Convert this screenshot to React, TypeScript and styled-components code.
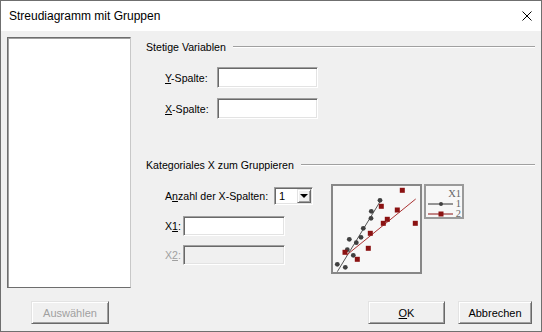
import React from 'react'
import styled, { createGlobalStyle } from 'styled-components'

const GlobalStyle = createGlobalStyle`
  html, body {
    margin: 0;
    padding: 0;
    background: #fff;
  }
  body {
    font-family: 'Liberation Sans', Arial, sans-serif;
  }
`

const Window = styled.div`
  width: 542px;
  height: 332px;
  box-sizing: border-box;
  border: 1px solid #6f6f6f;
  display: flex;
  flex-direction: column;
  background: #f0f0f0;
`

const TitleBar = styled.div`
  height: 30px;
  flex: none;
  background: #fff;
  display: flex;
  align-items: center;
  justify-content: space-between;
  padding: 0 9px 0 8px;
`

const Title = styled.span`
  font-size: 12px;
  color: #000;
`

const Body = styled.div`
  flex: 1;
  display: flex;
  flex-direction: column;
  padding: 6px 6px 0 6px;
  font-size: 10.6px;
  color: #000;
`

const Main = styled.div`
  display: flex;
  height: 251px;
`

const ListBox = styled.div`
  width: 124px;
  height: 251px;
  flex: none;
  box-sizing: border-box;
  background: #fff;
  border: 1px solid;
  border-color: #6d6d6d #c8c8c8 #6d6d6d #6d6d6d;
  box-shadow: inset 1px 1px 0 #a0a0a0;
`

const Content = styled.div`
  flex: 1;
  margin-left: 15px;
  padding-top: 3px;
  display: flex;
  flex-direction: column;
`

const GroupHeader = styled.div<{ $top?: number }>`
  height: 14px;
  margin-top: ${p => p.$top || 0}px;
  display: flex;
  align-items: center;
  gap: 7px;
  white-space: nowrap;
  &::after {
    content: '';
    flex: 1;
    border-top: 1px solid #a0a0a0;
    border-bottom: 1px solid #fff;
  }
`

const FieldRow = styled.div<{ $top?: number; $indent?: number }>`
  display: flex;
  align-items: center;
  margin-top: ${p => p.$top || 0}px;
  margin-left: ${p => p.$indent || 0}px;
`

const Label = styled.span<{ $w: number; $disabled?: boolean }>`
  width: ${p => p.$w}px;
  flex: none;
  white-space: nowrap;
  color: ${p => (p.$disabled ? '#a0a0a0' : '#000')};
`

const Key = styled.span`
  text-decoration: underline;
`

const TextBox = styled.div<{ $w: number; $h: number; $disabled?: boolean }>`
  width: ${p => p.$w}px;
  height: ${p => p.$h}px;
  box-sizing: border-box;
  background: ${p => (p.$disabled ? '#f0f0f0' : '#fff')};
  border: 1px solid;
  border-color: #a0a0a0 #fff #fff #a0a0a0;
  box-shadow: inset 1px 1px 0 #696969, inset -1px -1px 0 #e3e3e3;
`

const Lower = styled.div`
  display: flex;
  margin-left: 19px;
  margin-top: 12px;
`

const LeftCol = styled.div`
  width: 166px;
  flex: none;
  padding-top: 3px;
  display: flex;
  flex-direction: column;
`

const Combo = styled.div`
  width: 39px;
  height: 18px;
  box-sizing: border-box;
  border: 1px solid;
  border-color: #a0a0a0 #fff #fff #a0a0a0;
  box-shadow: inset 1px 1px 0 #696969, inset -1px -1px 0 #e3e3e3;
  background: #fff;
  display: flex;
  align-items: center;
  padding: 1px 1px 1px 2px;
`

const ComboValue = styled.span`
  flex: 1;
  padding-left: 2px;
  font-size: 11px;
`

const ComboArrow = styled.div`
  width: 14px;
  height: 14px;
  box-sizing: border-box;
  background: #f0f0f0;
  border: 1px solid;
  border-color: #e3e3e3 #696969 #696969 #e3e3e3;
  box-shadow: inset 1px 1px 0 #fff, inset -1px -1px 0 #a0a0a0;
  display: flex;
  align-items: center;
  justify-content: center;
  &::before {
    content: '';
    width: 0;
    height: 0;
    border-left: 4px solid transparent;
    border-right: 4px solid transparent;
    border-top: 4px solid #000;
  }
`

const ChartBox = styled.div`
  width: 91px;
  height: 90px;
  box-sizing: border-box;
  border: 2px solid #878787;
  background: #f7f7f7;
  flex: none;
`

const Legend = styled.div`
  width: 40px;
  height: 35px;
  box-sizing: border-box;
  margin-left: 2px;
  border: 2px solid #9a9a9a;
  background: #f7f7f7;
  padding: 3px 1px 0 0;
  font-family: 'Liberation Serif', 'Times New Roman', serif;
  font-size: 10.5px;
  color: #666;
`

const LegendRow = styled.div`
  height: 10px;
  line-height: 10px;
  display: flex;
  align-items: center;
  justify-content: flex-end;
  gap: 3px;
`

const Footer = styled.div`
  display: flex;
  align-items: center;
  margin-top: 13px;
  padding-right: 3px;
`

const Button = styled.div<{ $w: number; $disabled?: boolean; $gap?: number }>`
  width: ${p => p.$w}px;
  height: 23px;
  box-sizing: border-box;
  margin-left: ${p => p.$gap || 0}px;
  display: flex;
  align-items: center;
  justify-content: center;
  background: #f0f0f0;
  border: 1px solid;
  border-color: #e3e3e3 #696969 #696969 #e3e3e3;
  box-shadow: inset 1px 1px 0 #fff, inset -1px -1px 0 #a0a0a0;
  color: ${p => (p.$disabled ? '#a0a0a0' : '#000')};
  font-size: 11px;
`

const Spacer = styled.div`
  flex: 1;
`

const grayDots = [
  [47, 14.3], [38.3, 25.3], [38, 32.3], [30.3, 42.3], [28, 51.3], [23.3, 56.7],
  [16.3, 53.3], [14.3, 63.7], [20.3, 69.3], [4.3, 78.3], [12.3, 81.3],
]

const redSquares = [
  [69.3, 4.3], [48.3, 20.3], [64.3, 24], [54.3, 33.3], [50.3, 37.3],
  [82.3, 37.3], [37.3, 47.3], [35.3, 62.3], [12, 66.3], [24.3, 73.3],
]

const Scatter = () => (
  <svg width="87" height="86" viewBox="0 0 87 86" style={{ display: 'block' }}>
    <line x1="4.3" y1="85.7" x2="47" y2="15.7" stroke="#555" strokeWidth="1" />
    <line x1="13.7" y1="69" x2="82.7" y2="13" stroke="#a33" strokeWidth="1" />
    {grayDots.map(([x, y], i) => (
      <circle key={i} cx={x} cy={y} r="2.4" fill="#404040" />
    ))}
    {redSquares.map(([x, y], i) => (
      <rect key={i} x={x - 2.5} y={y - 2.5} width="5" height="5" fill="#8b1212" />
    ))}
  </svg>
)

const Marker = ({ kind }: { kind: 'dot' | 'square' }) => (
  <svg width="25" height="6" viewBox="0 0 25 6">
    <line x1="0" y1="3" x2="25" y2="3" stroke={kind === 'dot' ? '#333' : '#8b1212'} strokeWidth="1" />
    {kind === 'dot' ? (
      <circle cx="13" cy="3" r="2" fill="#404040" />
    ) : (
      <rect x="10.5" y="0.5" width="5" height="5" fill="#8b1212" />
    )}
  </svg>
)

const CloseIcon = () => (
  <svg width="10" height="10" viewBox="0 0 10 10">
    <path d="M0.5 0.5 L9.5 9.5 M9.5 0.5 L0.5 9.5" stroke="#000" strokeWidth="1" />
  </svg>
)

export default function App() {
  return (
    <>
      <GlobalStyle />
      <Window>
        <TitleBar>
          <Title>Streudiagramm mit Gruppen</Title>
          <CloseIcon />
        </TitleBar>
        <Body>
          <Main>
            <ListBox />
            <Content>
              <GroupHeader>Stetige Variablen</GroupHeader>
              <FieldRow $top={13} $indent={19}>
                <Label $w={52}>
                  <Key>Y</Key>-Spalte:
                </Label>
                <TextBox $w={101} $h={21} />
              </FieldRow>
              <FieldRow $top={10} $indent={19}>
                <Label $w={52}>
                  <Key>X</Key>-Spalte:
                </Label>
                <TextBox $w={101} $h={21} />
              </FieldRow>

              <GroupHeader $top={39}>Kategoriales X zum Gruppieren</GroupHeader>
              <Lower>
                <LeftCol>
                  <FieldRow>
                    <Label $w={109}>
                      A<Key>n</Key>zahl der X-Spalten:
                    </Label>
                    <Combo>
                      <ComboValue>1</ComboValue>
                      <ComboArrow />
                    </Combo>
                  </FieldRow>
                  <FieldRow $top={11}>
                    <Label $w={18}>
                      X<Key>1</Key>:
                    </Label>
                    <TextBox $w={102} $h={20} />
                  </FieldRow>
                  <FieldRow $top={9}>
                    <Label $w={18} $disabled>
                      X<Key>2</Key>:
                    </Label>
                    <TextBox $w={102} $h={20} $disabled />
                  </FieldRow>
                </LeftCol>
                <ChartBox>
                  <Scatter />
                </ChartBox>
                <Legend>
                  <LegendRow>X1</LegendRow>
                  <LegendRow>
                    <Marker kind="dot" />1
                  </LegendRow>
                  <LegendRow>
                    <Marker kind="square" />2
                  </LegendRow>
                </Legend>
              </Lower>
            </Content>
          </Main>
          <Footer>
            <Button $w={78} $gap={24} $disabled>
              Auswählen
            </Button>
            <Spacer />
            <Button $w={77}>
              <Key>O</Key>K
            </Button>
            <Button $w={74} $gap={13}>
              Abbrechen
            </Button>
          </Footer>
        </Body>
      </Window>
    </>
  )
}
